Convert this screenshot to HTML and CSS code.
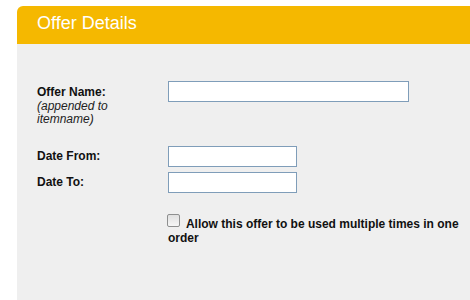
FILE: index.html
```html
<!DOCTYPE html>
<html>
<head>
<meta charset="utf-8">
<link rel="stylesheet" href="styles.css">
</head>
<body>
<div class="panel">
  <div class="panel-head">Offer Details</div>
  <div class="panel-body">
    <div class="row row-name">
      <div class="label"><b>Offer Name:</b><br><i>(appended to itemname)</i></div>
      <div class="field"><span class="input input-wide"></span></div>
    </div>
    <div class="row row-date">
      <div class="label"><b>Date From:</b></div>
      <div class="field"><span class="input input-short"></span></div>
    </div>
    <div class="row row-date row-date2">
      <div class="label"><b>Date To:</b></div>
      <div class="field"><span class="input input-short"></span></div>
    </div>
    <div class="row row-check">
      <div class="label"></div>
      <div class="field check-text"><span class="checkbox"></span> Allow this offer to be used multiple times in one order</div>
    </div>
  </div>
</div>
</body>
</html>
```
FILE: styles.css
```css
html, body {
  margin: 0;
  padding: 0;
  background: #ffffff;
  overflow: hidden;
  width: 470px;
  height: 300px;
}
.panel {
  margin: 6px 0 0 17px;
  width: 453px;
  font-family: "Liberation Sans", Arial, sans-serif;
}
.panel-head {
  height: 38px;
  line-height: 34px;
  background: #f5b800;
  color: #ffffff;
  font-size: 18px;
  padding-left: 20px;
  border-top-left-radius: 6px;
}
.panel-body {
  background: #efefef;
  height: 256px;
  padding: 37px 0 0 20px;
  box-sizing: border-box;
  color: #111;
  font-size: 12px;
  line-height: 13.5px;
}
.row {
  display: grid;
  grid-template-columns: 131px 295px;
  align-items: start;
}
.label { padding-top: 5px; width: 110px; }
.label i { color: #222; }
.row-date { margin-top: 19.5px; }
.row-date .label { padding-top: 4px; }
.row-date2 { margin-top: 5px; }
.row-check { margin-top: 21px; }
.input {
  display: block;
  height: 21px;
  box-sizing: border-box;
  border: 1px solid #7f9db9;
  background: #fff;
}
.input-wide { width: 241px; }
.input-short { width: 129px; }
.check-text { font-weight: bold; }
.checkbox {
  display: inline-block;
  width: 13px;
  height: 13px;
  box-sizing: border-box;
  border: 1px solid #8e8f8f;
  border-radius: 2px;
  background: linear-gradient(#e0e0e0, #f6f6f6);
  vertical-align: 1px;
  margin-left: -1px;
  margin-right: 3px;
}
```
